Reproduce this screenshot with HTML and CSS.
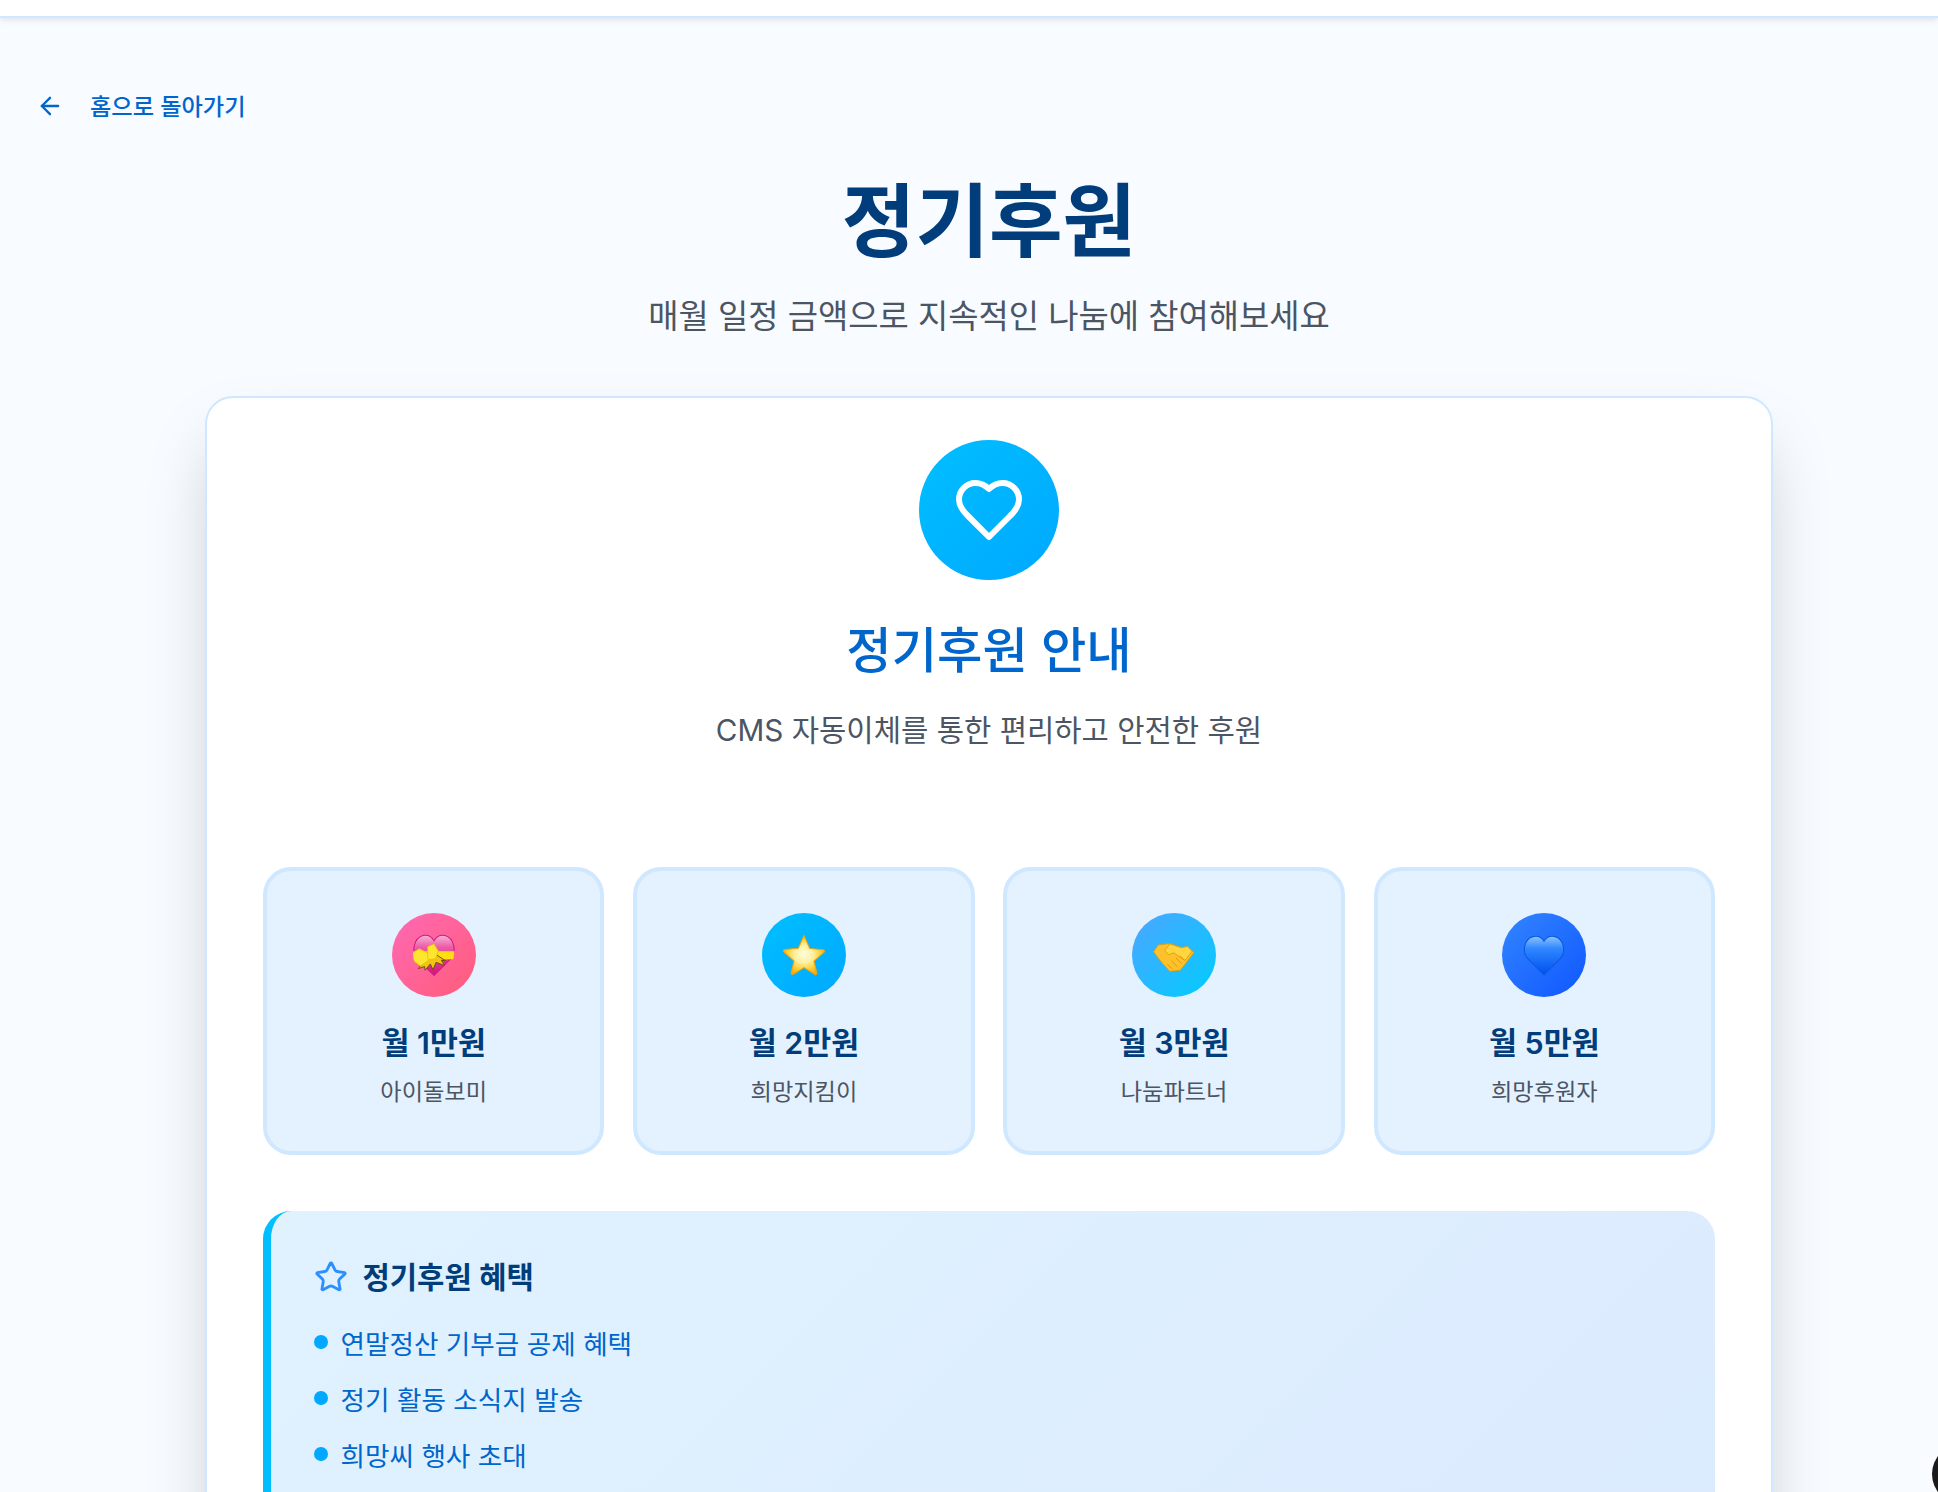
FILE: index.html
```html
<!DOCTYPE html>
<html lang="ko">
<head>
    <meta charset="UTF-8">
    <meta name="viewport" content="width=device-width, initial-scale=1.0">
    <title>정기후원</title>
    <link rel="stylesheet" href="styles.css">
</head>
<body>
    <div class="topbar"></div>

    <main class="page">
        <a class="back-link" href="#">
            <svg class="back-icon" viewBox="0 0 24 24" fill="none" stroke="currentColor" stroke-width="2" stroke-linecap="round" stroke-linejoin="round">
                <path d="M19 12H5"/>
                <path d="M12 19l-7-7 7-7"/>
            </svg>
            <span>홈으로 돌아가기</span>
        </a>

        <div class="page-head">
            <h1 class="page-title">정기후원</h1>
            <p class="page-sub">매월 일정 금액으로 지속적인 나눔에 참여해보세요</p>
        </div>

        <section class="card">
            <div class="card-head">
                <div class="head-icon">
                    <svg viewBox="0 0 24 24" fill="none" stroke="#fff" stroke-width="2" stroke-linecap="round" stroke-linejoin="round">
                        <path d="M19 14c1.490-1.460 3-3.210 3-5.500A5.500 5.500 0 0 0 16.500 3c-1.760 0-3 .5-4.500 2-1.500-1.500-2.740-2-4.500-2A5.500 5.500 0 0 0 2 8.500c0 2.300 1.500 4.050 3 5.500l7 7Z"/>
                    </svg>
                </div>
                <h2 class="card-title">정기후원 안내</h2>
                <p class="card-sub">CMS 자동이체를 통한 편리하고 안전한 후원</p>
            </div>

            <div class="tiers">
                <div class="tier">
                    <div class="tier-icon tier-pink">
                        <svg class="emoji" viewBox="0 0 40 40">
                            <defs>
                                <linearGradient id="pinkHeart" x1="0" y1="0" x2="0" y2="1">
                                    <stop offset="0" stop-color="#f7b3d6"/>
                                    <stop offset="0.3" stop-color="#ec5aa6"/>
                                    <stop offset="1" stop-color="#d3147c"/>
                                </linearGradient>
                            </defs>
                            <path d="M20 39.500 4 23.500C-2 16.500 1 4 9.500 1.500 14 .5 18 3 20 6.500 22 3 26 .5 30.500 1.500 39 4 42 16.500 36 23.500z" fill="url(#pinkHeart)" stroke="#d01a80" stroke-width="1"/>
                            <path d="M.5 16.500h39l-1 7.500-37.500 1z" fill="#ffdc14"/>
                            <path d="M15 21 5 33l6-2 .5 3.500 5-6 2.500 5.500 3-7 8 3-3-5 4 .5-10-6.500z" fill="#f2c514" stroke="#5f4800" stroke-width=".8" stroke-linejoin="round"/>
                            <path d="M16 19 6 14-.5 18l1.500 8 6 4.500 10-7z" fill="#ffe62e" stroke="#e8b90c" stroke-width=".7" stroke-linejoin="round"/>
                            <path d="M14 21 14 12l6-2.500 4 6.500-2.500 7.500-7 1z" fill="#ffe62e" stroke="#e8b90c" stroke-width=".7" stroke-linejoin="round"/>
                        </svg>
                    </div>
                    <div class="tier-amount">월 1만원</div>
                    <div class="tier-name">아이돌보미</div>
                </div>
                <div class="tier">
                    <div class="tier-icon tier-sky">
                        <svg class="emoji" viewBox="0 0 40 40">
                            <defs>
                                <radialGradient id="goldStar" cx="0.5" cy="0.48" r="0.55">
                                    <stop offset="0" stop-color="#fffde0"/>
                                    <stop offset="0.4" stop-color="#fff0a0"/>
                                    <stop offset="0.75" stop-color="#ffcb2e"/>
                                    <stop offset="1" stop-color="#f7a70a"/>
                                </radialGradient>
                            </defs>
                            <path d="M20 1.500l5.400 12.300 12.800 1.200c1.500.3 1.700 1.700.7 2.500l-9.400 8.300 2.700 11.200c.3 1.300-.9 2.100-2 1.500L20 32l-10.200 6.300c-1.100.6-2.300-.2-2-1.500l2.700-11.200-9.400-8.300c-1-.8-.8-2.200.7-2.500l12.800-1.200z" fill="url(#goldStar)" stroke="#f0a30f" stroke-width="1" stroke-linejoin="round"/>
                        </svg>
                    </div>
                    <div class="tier-amount">월 2만원</div>
                    <div class="tier-name">희망지킴이</div>
                </div>
                <div class="tier">
                    <div class="tier-icon tier-mix">
                        <svg class="emoji" viewBox="0 0 40 40">
                            <path d="M.5 17 5 10.500l11-1.500 11 4 6-1 6 5.500-6 8-7 9-10 1-7-7.500z" fill="#fdc22b" stroke="#e39a0a" stroke-width=".8" stroke-linejoin="round"/>
                            <path d="M11 16l5-6.500 11 3.500 6-1 4 4.500-5 7-2 1.500-10-7-5 1.500z" fill="#ffd640" stroke="#e39a0a" stroke-width=".8" stroke-linejoin="round"/>
                            <path d="M14 29l4 4M18 26l5 5M22 23l5 5M26 21l4 4" stroke="#e09508" stroke-width=".9" fill="none" stroke-linecap="round"/>
                        </svg>
                    </div>
                    <div class="tier-amount">월 3만원</div>
                    <div class="tier-name">나눔파트너</div>
                </div>
                <div class="tier">
                    <div class="tier-icon tier-blue">
                        <svg class="emoji" viewBox="0 0 40 40">
                            <defs>
                                <linearGradient id="blueHeart" x1="0" y1="0" x2="0" y2="1">
                                    <stop offset="0" stop-color="#8cc4ff"/>
                                    <stop offset="0.32" stop-color="#2f86ff"/>
                                    <stop offset="1" stop-color="#0050ee"/>
                                </linearGradient>
                            </defs>
                            <path d="M20 39 4.500 23.500C-1.500 16.500 1.500 4.500 9.500 2.500 14 1.500 18 3.500 20 7 22 3.500 26 1.500 30.500 2.500 38.500 4.500 41.500 16.500 35.500 23.500z" fill="url(#blueHeart)" stroke="#0b5be0" stroke-width="1"/>
                        </svg>
                    </div>
                    <div class="tier-amount">월 5만원</div>
                    <div class="tier-name">희망후원자</div>
                </div>
            </div>

            <div class="benefits">
                <h3 class="benefits-title">
                    <svg class="star-icon" viewBox="0 0 24 24" fill="none" stroke="currentColor" stroke-width="2" stroke-linecap="round" stroke-linejoin="round">
                        <path d="M11.525 2.295a.53.53 0 0 1 .95 0l2.310 4.679a2.123 2.123 0 0 0 1.595 1.160l5.166.756a.53.53 0 0 1 .294.904l-3.736 3.638a2.123 2.123 0 0 0-.611 1.878l.882 5.140a.53.53 0 0 1-.771.560l-4.618-2.428a2.122 2.122 0 0 0-1.973 0L6.396 21.010a.53.53 0 0 1-.77-.560l.881-5.139a2.122 2.122 0 0 0-.611-1.879L2.160 9.795a.53.53 0 0 1 .294-.906l5.165-.755a2.122 2.122 0 0 0 1.597-1.160z"/>
                    </svg>
                    <span>정기후원 혜택</span>
                </h3>
                <ul class="benefit-list">
                    <li>연말정산 기부금 공제 혜택</li>
                    <li>정기 활동 소식지 발송</li>
                    <li>희망씨 행사 초대</li>
                </ul>
            </div>
        </section>
    </main>

    <div class="chat-bubble"></div>
</body>
</html>
```

FILE: styles.css
```css
* {
    margin: 0;
    padding: 0;
    box-sizing: border-box;
}

html, body {
    height: 100vh;
    overflow: hidden;
}

body {
    font-family: Inter, 'Noto Sans CJK KR', sans-serif;
    background: #f8fbff;
    color: #374151;
}

.topbar {
    height: 18px;
    background: #ffffff;
    border-bottom: 2px solid #cfe8ff;
    box-shadow: 0 2px 6px rgba(0, 0, 0, 0.1);
}

.page {
    width: 1978px;
}

.back-link {
    display: inline-flex;
    align-items: center;
    gap: 26.500px;
    margin: 71px 0 0 35.500px;
    height: 32px;
    color: #0066cc;
    font-size: 23.200px;
    font-weight: 500;
    text-decoration: none;
}

.back-icon {
    width: 28px;
    height: 28px;
    margin-top: 2px;
}

.page-head {
    margin-top: 47px;
    text-align: center;
}

.page-title {
    font-size: 80px;
    line-height: 100px;
    font-weight: 700;
    color: #003d7a;
}

.page-sub {
    margin-top: 23px;
    font-size: 32.900px;
    line-height: 44px;
    color: #4b5563;
}

.card {
    width: 1568px;
    height: 1400px;
    margin: 58px auto 0;
    padding: 42px 56px;
    background: #ffffff;
    border: 2px solid #cfe8ff;
    border-radius: 28px;
    box-shadow: 0 35px 70px -17px rgba(0, 0, 0, 0.25);
}

.card-head {
    text-align: center;
}

.head-icon {
    display: flex;
    align-items: center;
    justify-content: center;
    width: 140px;
    height: 140px;
    margin: 0 auto;
    border-radius: 50%;
    background: linear-gradient(135deg, #00bfff, #00a8ff);
}

.head-icon svg {
    width: 72px;
    height: 72px;
}

.card-title {
    margin-top: 35px;
    font-size: 49.300px;
    line-height: 70px;
    font-weight: 500;
    color: #0066cc;
}

.card-sub {
    margin-top: 23px;
    font-size: 29.700px;
    line-height: 44px;
    color: #4b5563;
}

.tiers {
    display: grid;
    grid-template-columns: repeat(4, 1fr);
    gap: 28.800px;
    margin-top: 115px;
}

.tier {
    height: 288px;
    padding-top: 42px;
    text-align: center;
    background: #e4f1ff;
    border: 4px solid #cfe8ff;
    border-radius: 28px;
}

.tier-icon {
    display: flex;
    align-items: center;
    justify-content: center;
    width: 84px;
    height: 84px;
    margin: 0 auto;
    border-radius: 50%;
}

.tier-pink { background: linear-gradient(135deg, #ff69b4, #ff5c7a); }
.tier-sky { background: linear-gradient(135deg, #00bfff, #00a8ff); }
.tier-mix { background: linear-gradient(135deg, #4da6ff, #00ccff); }
.tier-blue { background: linear-gradient(135deg, #3385ff, #0f57ff); }

.emoji {
    width: 42px;
    height: 42px;
}

.tier-amount {
    margin-top: 24px;
    font-size: 30.400px;
    line-height: 44px;
    font-weight: 600;
    color: #003d7a;
}

.tier-name {
    margin-top: 10px;
    font-size: 23.200px;
    line-height: 34px;
    color: #4b5563;
}

.benefits {
    margin-top: 56px;
    height: 500px;
    padding: 44px 42.500px;
    background: linear-gradient(135deg, #e0f2fe, #dbeafe);
    border-left: 8px solid #00bfff;
    border-radius: 28px;
}

.benefits-title {
    display: flex;
    align-items: center;
    gap: 15px;
    font-size: 29.700px;
    line-height: 44px;
    font-weight: 600;
    color: #003d7a;
}

.star-icon {
    width: 34px;
    height: 34px;
    color: #2b8fff;
}

.benefit-list {
    margin-top: 15px;
    list-style: none;
}

.benefit-list li {
    display: flex;
    align-items: center;
    gap: 13px;
    height: 56px;
    font-size: 26.600px;
    color: #0066cc;
}

.benefit-list li::before {
    content: "";
    width: 14px;
    height: 14px;
    border-radius: 50%;
    background: #00a8ff;
}

.chat-bubble {
    position: fixed;
    left: 1932px;
    top: 1444px;
    width: 60px;
    height: 60px;
    border-radius: 50%;
    background: #1a1a1a;
}
```
